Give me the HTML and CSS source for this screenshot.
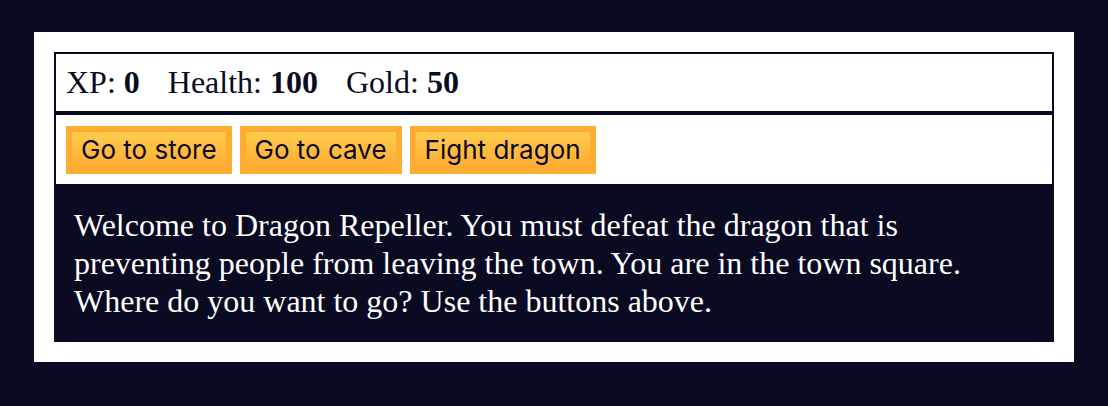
FILE: index.html
```html
<!DOCTYPE html>
<html lang="en">
<head>
<meta charset="utf-8">
<title>RPG - Dragon Repeller</title>
<link rel="stylesheet" href="styles.css">
</head>
<body>
<div class="game">
  <div class="stats">
    <span class="stat">XP: <strong>0</strong></span>
    <span class="stat">Health: <strong>100</strong></span>
    <span class="stat">Gold: <strong>50</strong></span>
  </div>
  <div class="controls">
    <button class="btn">Go to store</button>
    <button class="btn">Go to cave</button>
    <button class="btn">Fight dragon</button>
  </div>
  <div class="text">
    Welcome to Dragon Repeller. You must defeat the dragon that is preventing people from leaving the town. You are in the town square. Where do you want to go? Use the buttons above.
  </div>
</div>
</body>
</html>
```

FILE: styles.css
```css
html, body {
  margin: 0;
  background-color: #0a0a23;
}
body {
  font-family: "Liberation Serif", "Times New Roman", serif;
  font-size: 32px;
  padding-top: 32px;
}
.game {
  max-width: 1000px;
  background-color: #ffffff;
  color: #ffffff;
  margin: 0 auto;
  padding: 20px;
}
.stats, .controls {
  border: 2px solid #0a0a23;
  padding: 10px;
  color: #0a0a23;
}
.controls {
  padding-top: 11px;
}
.stat {
  padding-right: 20px;
}
.btn {
  cursor: pointer;
  font-family: "Inter", "Helvetica Neue", Arial, sans-serif;
  font-size: 26px;
  line-height: 32px;
  padding: 2px 9px;
  margin: 0;
  color: #0a0a23;
  background-color: #feac32;
  background-image: linear-gradient(#fecc4c, #ffac33);
  border: 6px solid #feac32;
}
.text {
  background-color: #0a0a23;
  color: #ffffff;
  line-height: 38px;
  padding: 20px 20px 22px;
}
```
